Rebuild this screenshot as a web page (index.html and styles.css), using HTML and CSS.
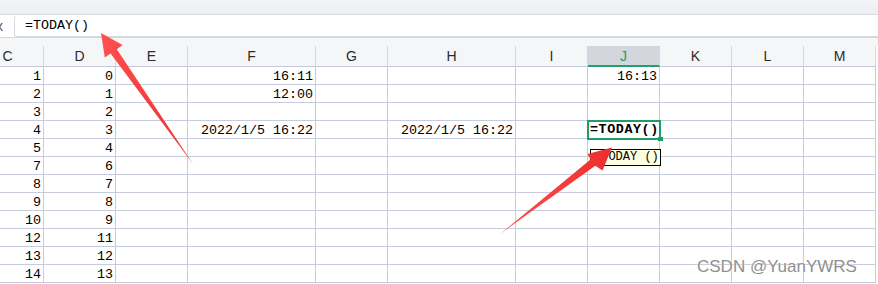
FILE: index.html
```html
<!DOCTYPE html>
<html>
<head>
<meta charset="utf-8">
<link rel="stylesheet" href="styles.css">
</head>
<body>
<div class="app">
  <div class="topbar"></div>
  <div class="formula-row">
    <span class="fx">x</span>
    <div class="formula-box">=TODAY()</div>
  </div>
  <div class="header-gap"></div>
  <div class="grid">
    <div class="hd">C</div><div class="hd">D</div><div class="hd">E</div><div class="hd">F</div><div class="hd">G</div><div class="hd">H</div><div class="hd">I</div><div class="hd active">J</div><div class="hd">K</div><div class="hd">L</div><div class="hd">M</div>

    <div class="c">1</div><div class="c">0</div><div class="c"></div><div class="c">16:11</div><div class="c"></div><div class="c"></div><div class="c"></div><div class="c">16:13</div><div class="c"></div><div class="c"></div><div class="c"></div>
    <div class="c">2</div><div class="c">1</div><div class="c"></div><div class="c">12:00</div><div class="c"></div><div class="c"></div><div class="c"></div><div class="c"></div><div class="c"></div><div class="c"></div><div class="c"></div>
    <div class="c">3</div><div class="c">2</div><div class="c"></div><div class="c"></div><div class="c"></div><div class="c"></div><div class="c"></div><div class="c"></div><div class="c"></div><div class="c"></div><div class="c"></div>
    <div class="c">4</div><div class="c">3</div><div class="c"></div><div class="c">2022/1/5 16:22</div><div class="c"></div><div class="c">2022/1/5 16:22</div><div class="c"></div><div class="c editing">=TODAY()<div class="tip">=TODAY ()</div></div><div class="c"></div><div class="c"></div><div class="c"></div>
    <div class="c">5</div><div class="c">4</div><div class="c"></div><div class="c"></div><div class="c"></div><div class="c"></div><div class="c"></div><div class="c"></div><div class="c"></div><div class="c"></div><div class="c"></div>
    <div class="c">7</div><div class="c">6</div><div class="c"></div><div class="c"></div><div class="c"></div><div class="c"></div><div class="c"></div><div class="c"></div><div class="c"></div><div class="c"></div><div class="c"></div>
    <div class="c">8</div><div class="c">7</div><div class="c"></div><div class="c"></div><div class="c"></div><div class="c"></div><div class="c"></div><div class="c"></div><div class="c"></div><div class="c"></div><div class="c"></div>
    <div class="c">9</div><div class="c">8</div><div class="c"></div><div class="c"></div><div class="c"></div><div class="c"></div><div class="c"></div><div class="c"></div><div class="c"></div><div class="c"></div><div class="c"></div>
    <div class="c">10</div><div class="c">9</div><div class="c"></div><div class="c"></div><div class="c"></div><div class="c"></div><div class="c"></div><div class="c"></div><div class="c"></div><div class="c"></div><div class="c"></div>
    <div class="c">12</div><div class="c">11</div><div class="c"></div><div class="c"></div><div class="c"></div><div class="c"></div><div class="c"></div><div class="c"></div><div class="c"></div><div class="c"></div><div class="c"></div>
    <div class="c">13</div><div class="c">12</div><div class="c"></div><div class="c"></div><div class="c"></div><div class="c"></div><div class="c"></div><div class="c"></div><div class="c"></div><div class="c"></div><div class="c"></div>
    <div class="c">14</div><div class="c">13</div><div class="c"></div><div class="c"></div><div class="c"></div><div class="c"></div><div class="c"></div><div class="c"></div><div class="c"></div><div class="c"></div><div class="c"></div>
  </div>

  <svg class="arrows" width="878" height="284" viewBox="0 0 878 284">
    <defs>
      <linearGradient id="ag" x1="0" y1="0" x2="1" y2="0">
        <stop offset="0" stop-color="#ff5050"/>
        <stop offset="1" stop-color="#ee2e2e"/>
      </linearGradient>
    </defs>
    <polygon fill="url(#ag)" points="101,33 122.5,45 116.8,49.3 193,164 110.6,53.5 104.8,57.5"/>
    <polygon fill="url(#ag)" points="612,147.5 602.5,170.5 595.3,165.8 500,234 590.5,159.4 587.5,154"/>
  </svg>

  <div class="watermark">CSDN @YuanYWRS</div>
</div>
</body>
</html>
```

FILE: styles.css
```css
html, body {
  margin: 0;
  padding: 0;
  background: #ffffff;
  overflow: hidden;
}

.app {
  position: relative;
  width: 878px;
  height: 284px;
  overflow: hidden;
  background: #ffffff;
}

.topbar {
  height: 14px;
  background: linear-gradient(#f3f4f6, #eceef1);
  border-bottom: 1px solid #d9dce2;
}

.formula-row {
  height: 22px;
  display: flex;
  align-items: center;
  border-bottom: 1px solid #d3d7de;
  background: #ffffff;
}

.fx {
  font-family: "Liberation Sans", sans-serif;
  font-size: 14px;
  color: #555;
  margin-left: -4px;
  width: 18px;
}

.formula-box {
  flex: 1;
  height: 21px;
  box-sizing: border-box;
  border: 1px solid #d6d9df;
  border-right: none;
  border-top: none;
  border-radius: 3px 0 0 3px;
  padding-left: 10px;
  font-family: "Liberation Mono", monospace;
  font-size: 13.33px;
  line-height: 20px;
  color: #000;
}

.header-gap {
  height: 8px;
  background: #f5f6f8;
}

.grid {
  display: grid;
  grid-template-columns: 72px 72px 72px 128px 72px 128px 72px 72px 72px 72px 72px;
  grid-template-rows: 21px repeat(12, 18px);
  margin-left: -28px;
  width: max-content;
}

.hd {
  box-sizing: border-box;
  background: #f5f6f8;
  border-right: 1px solid #d3d7df;
  border-bottom: 1px solid #c3c9d8;
  font-family: "Liberation Sans", sans-serif;
  font-size: 14px;
  color: #2b2b2b;
  display: flex;
  align-items: center;
  justify-content: center;
}

.hd.active {
  background: #d3d6dd;
  color: #1e9e67;
  border-bottom: 2px solid #1fa36b;
}

.c {
  box-sizing: border-box;
  border-right: 1px solid #c6ccdc;
  border-bottom: 1px solid #c6ccdc;
  font-family: "Liberation Mono", monospace;
  font-size: 13.33px;
  line-height: 17px;
  padding-top: 1px;
  color: #000;
  text-align: right;
  padding-right: 2px;
  white-space: nowrap;
}

.c.editing {
  position: relative;
  text-align: left;
  padding-left: 2px;
  padding-top: 0;
  font-weight: bold;
  letter-spacing: 0.6px;
  outline: 2px solid #1e9e67;
  outline-offset: -1px;
  z-index: 2;
  line-height: 18px;
}

.c.editing::after {
  content: "";
  position: absolute;
  right: -4px;
  bottom: -3px;
  width: 5px;
  height: 4px;
  background: #1e9e67;
}

.tip {
  position: absolute;
  left: 2px;
  top: 28px;
  width: 71px;
  height: 17px;
  box-sizing: border-box;
  background: #ffffe1;
  border: 1px solid #000;
  font-weight: normal;
  font-size: 12px;
  letter-spacing: 0;
  line-height: 15px;
  padding-left: 3px;
}

.arrows {
  position: absolute;
  left: 0;
  top: 0;
  z-index: 5;
  pointer-events: none;
}

.watermark {
  position: absolute;
  left: 697px;
  top: 257px;
  z-index: 6;
  font-family: "Liberation Sans", sans-serif;
  font-size: 17px;
  color: #8f8f8f;
  text-shadow: 0 0 1px #fff, 0 0 2px #fff;
}
```
